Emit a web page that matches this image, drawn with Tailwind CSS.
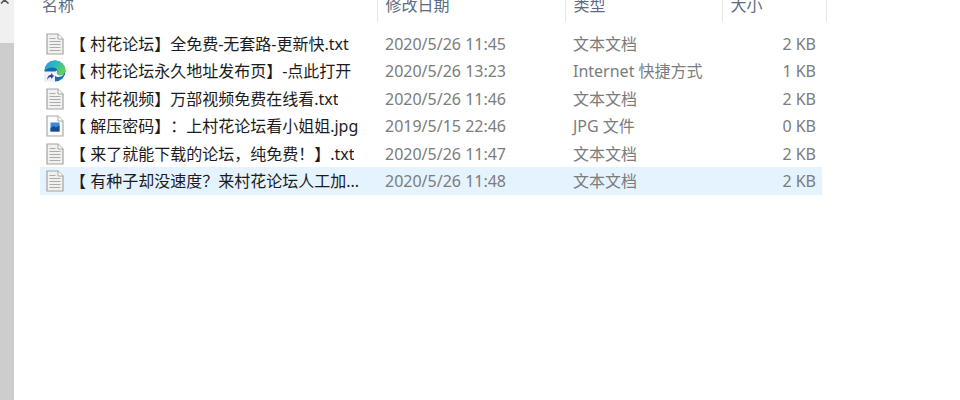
<!DOCTYPE html>
<html lang="zh-CN">
<head>
  <meta charset="UTF-8" />
  <meta name="viewport" content="width=device-width, initial-scale=1.0"/>
  <title>文件列表</title>
  <script src="https://cdn.jsdelivr.net/npm/@tailwindcss/browser@4"></script>
</head>
<body class="bg-white font-['Noto_Sans','Noto_Sans_CJK_SC',sans-serif] text-base [text-spacing-trim:space-all]">

  <!-- shared icons -->
  <svg class="absolute h-0 w-0" aria-hidden="true">
    <defs>
      <linearGradient id="edge-top" x1="0" y1="0" x2="1" y2="0.500">
        <stop offset="0" stop-color="#2397d8"/>
        <stop offset="0.500" stop-color="#2bb8c4"/>
        <stop offset="1" stop-color="#62d157"/>
      </linearGradient>
    </defs>
    <symbol id="icon-text" viewBox="0 0 18 22">
      <path d="M1 1h11l5 5v15H1z" fill="#f1f1f0" stroke="#a3a3a1" stroke-width="1.2"/>
      <path d="M12 1v5h5" fill="#fff" stroke="#a3a3a1"/>
      <path d="M3.5 5.5h6M3.5 8.5h11M3.5 11.5h11M3.5 14.5h11M3.5 17.5h11" stroke="#a9abac" fill="none"/>
    </symbol>
    <symbol id="icon-image" viewBox="0 0 18 22">
      <path d="M1 1h11l5 5v15H1z" fill="#fbfbfa" stroke="#a9a9a5" stroke-width="1.2"/>
      <path d="M12 1v5h5" fill="#fff" stroke="#a9a9a5"/>
      <path d="M4.5 7.5h9v9h-9z" fill="#3b8ad8"/>
      <path d="M4.5 13l3-2 2.500 1.500 3.500-2v6h-9z" fill="#174a92"/>
    </symbol>
    <symbol id="icon-edge" viewBox="0 0 22 22">
      <circle cx="11" cy="11" r="10.500" fill="#1769b5"/>
      <path d="M.5 11C1 4.500 5.500.5 11 .5S21.500 5 21.500 10c0 3.500-2.500 5-5.500 5-2.500 0-3.500-1-3-2 1.500-2.500-.5-5.500-4-5.500C5 7.500 1.500 9 .5 11z" fill="url(#edge-top)"/>
      <path d="M12.500 10.500c1.500 1-.5 2.500 1 3.800 1.500 1.500 4.500 1.200 6.500-.3-1 2-3 3-5.500 3-3 0-5-2-4.500-4.500z" fill="#e8f6fa"/>
      <path d="M0 11.500h11V22H0z" fill="#eef0f6"/>
      <path d="M3.500 20c-.5-3 1-5 3.500-5v-2l3 3-3 3v-2c-2 0-3 1-3.500 3z" fill="#35489c"/>
    </symbol>
  </svg>

  <div class="flex h-screen overflow-hidden">

    <!-- scrollbar of the navigation pane -->
    <div class="flex w-[14px] shrink-0 flex-col bg-[#cdcdcd]">
      <div class="h-[43px] bg-[#f0f0f0]">
        <svg class="h-1 w-2.5" viewBox="0 0 10 4" fill="none" stroke="#555" stroke-width="1.600"><path d="M1 3.500L4.500 0 8.500 3.500"/></svg>
      </div>
    </div>

    <main class="min-w-0 flex-1 pl-[26px]">
      <table class="w-[787px] table-fixed border-collapse whitespace-nowrap text-left">
        <colgroup>
          <col class="w-[337px]">
          <col class="w-[188px]">
          <col class="w-[157px]">
          <col class="w-[100px]">
          <col>
        </colgroup>
        <thead class="leading-[10px] text-[#5c6c84]">
          <tr class="h-[22px] align-top">
            <th class="border-r border-[#e5e5e5] pl-0.5 font-normal">名称</th>
            <th class="border-r border-[#e5e5e5] pl-2 font-normal">修改日期</th>
            <th class="border-r border-[#e5e5e5] pl-2 font-normal">类型</th>
            <th class="border-r border-[#e5e5e5] pl-2 font-normal" colspan="2">大小</th>
          </tr>
          <tr class="h-2"><td colspan="5"></td></tr>
        </thead>
        <tbody class="leading-6 text-[#7c7c7c]">
          <tr class="odd:h-[27px] even:h-[28px]">
            <td><div class="flex items-center gap-1.5 pl-1.5 text-[#1c1c1c]"><svg class="h-[22px] w-[18px] shrink-0"><use href="#icon-text"/></svg><span class="truncate">【 村花论坛】全免费-无套路-更新快.txt</span></div></td>
            <td class="pl-2">2020/5/26 11:45</td>
            <td class="pl-2">文本文档</td>
            <td class="pr-1.5 text-right">2 KB</td>
          </tr>
          <tr class="odd:h-[27px] even:h-[28px]">
            <td><div class="flex items-center gap-1 pl-1 text-[#1c1c1c]"><svg class="h-[22px] w-[22px] shrink-0"><use href="#icon-edge"/></svg><span class="truncate">【 村花论坛永久地址发布页】-点此打开</span></div></td>
            <td class="pl-2">2020/5/26 13:23</td>
            <td class="pl-2">Internet 快捷方式</td>
            <td class="pr-1.5 text-right">1 KB</td>
          </tr>
          <tr class="odd:h-[27px] even:h-[28px]">
            <td><div class="flex items-center gap-1.5 pl-1.5 text-[#1c1c1c]"><svg class="h-[22px] w-[18px] shrink-0"><use href="#icon-text"/></svg><span class="truncate">【 村花视频】万部视频免费在线看.txt</span></div></td>
            <td class="pl-2">2020/5/26 11:46</td>
            <td class="pl-2">文本文档</td>
            <td class="pr-1.5 text-right">2 KB</td>
          </tr>
          <tr class="odd:h-[27px] even:h-[28px]">
            <td><div class="flex items-center gap-1.5 pl-1.5 text-[#1c1c1c]"><svg class="h-[22px] w-[18px] shrink-0"><use href="#icon-image"/></svg><span class="truncate">【 解压密码】：上村花论坛看小姐姐.jpg</span></div></td>
            <td class="pl-2">2019/5/15 22:46</td>
            <td class="pl-2">JPG 文件</td>
            <td class="pr-1.5 text-right">0 KB</td>
          </tr>
          <tr class="odd:h-[27px] even:h-[28px]">
            <td><div class="flex items-center gap-1.5 pl-1.5 text-[#1c1c1c]"><svg class="h-[22px] w-[18px] shrink-0"><use href="#icon-text"/></svg><span class="truncate">【 来了就能下载的论坛，纯免费！】.txt</span></div></td>
            <td class="pl-2">2020/5/26 11:47</td>
            <td class="pl-2">文本文档</td>
            <td class="pr-1.5 text-right">2 KB</td>
          </tr>
          <tr class="odd:h-[27px] even:h-[28px]">
            <td class="bg-[#e5f3ff]"><div class="flex items-center gap-1.5 pl-1.5 text-[#1c1c1c]"><svg class="h-[22px] w-[18px] shrink-0"><use href="#icon-text"/></svg><span class="truncate">【 有种子却没速度？来村花论坛人工加...</span></div></td>
            <td class="bg-[#e5f3ff] pl-2">2020/5/26 11:48</td>
            <td class="bg-[#e5f3ff] pl-2">文本文档</td>
            <td class="bg-[#e5f3ff] pr-1.5 text-right">2 KB</td>
          </tr>
        </tbody>
      </table>
    </main>
  </div>

</body>
</html>
